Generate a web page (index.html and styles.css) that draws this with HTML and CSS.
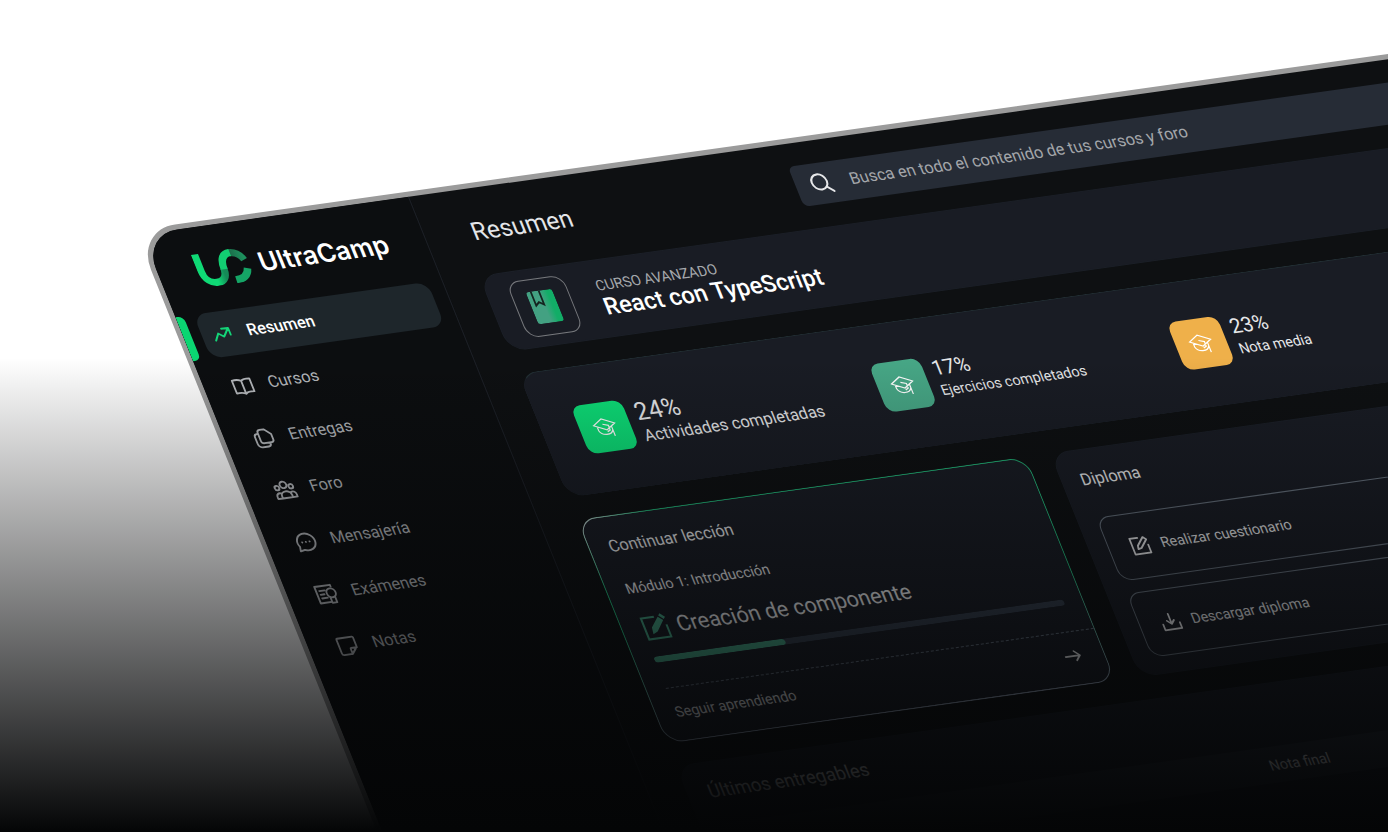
FILE: index.html
```
<!DOCTYPE html>
<html lang="es">
<head>
<meta charset="utf-8">
<meta name="viewport" content="width=device-width, initial-scale=1">
<title>UltraCamp - Resumen</title>
<link rel="stylesheet" href="styles.css">
</head>
<body>

<!-- shared icons -->
<svg class="defs" width="0" height="0" aria-hidden="true">
  <symbol id="cap" viewBox="0 0 32 32">
    <path d="M2 12.500 15 5 30 12.500 17 20zM14 12l7 2.500v6l-4 2M6 15.500v4c2 7.500 15 8.500 18.500 1M24.500 15.500V29"/>
  </symbol>
  <symbol id="edit" viewBox="0 0 24 24">
    <path d="M12 3H3v18h18v-9M8.500 15.500l.8-3.800L18 3l3 3-8.700 8.700z"/>
  </symbol>
  <symbol id="arrow" viewBox="0 0 24 24">
    <path d="M3 12h17M14.500 6.500 20 12l-5.500 5.500"/>
  </symbol>
</svg>

<div class="scene">
  <div class="panel">

    <aside class="sidebar">
      <a class="brand" href="#">
        <svg class="mark" viewBox="0 0 54 34" aria-hidden="true">
          <defs>
            <linearGradient id="fold" x1="0" y1="0" x2="1" y2="0">
              <stop offset="0.550" stop-color="#0fd975"/>
              <stop offset="0.950" stop-color="#158a57"/>
            </linearGradient>
            <linearGradient id="tip" x1="0" y1="0" x2="1" y2="0">
              <stop offset="0" stop-color="#1c6a49"/>
              <stop offset="1" stop-color="#1d8f5d"/>
            </linearGradient>
          </defs>
          <path d="M34 30.500C41 31 47 27.500 49 21" stroke="#15a566"/>
          <path d="M37 4C43 4 47 7 49 12.500" stroke="url(#tip)"/>
          <path d="M4 1V18C4 26 9 30.500 15.500 30.500S26.500 26 26.500 18" stroke="url(#fold)"/>
          <path d="M26.500 19C26.500 9 31 4 38 4" stroke="#12cf72"/>
        </svg>
        <span>UltraCamp</span>
      </a>
      <nav class="menu">
        <a class="item active" href="#">
          <svg class="icon" viewBox="0 0 24 24"><path d="M3 18l5-7 5 4 7-8M13 6.500h7.500V14"/></svg>
          Resumen
        </a>
        <a class="item" href="#">
          <svg class="icon" viewBox="0 0 24 24"><path d="M12 6.500C10 5 6 4.500 2.500 5v14c3.500-.5 7.500 0 9.500 1.500 2-1.500 6-2 9.500-1.500V5C18 4.500 14 5 12 6.500zv14"/></svg>
          Cursos
        </a>
        <a class="item" href="#">
          <svg class="icon" viewBox="0 0 24 24"><path d="M10.500 3H15l6 6v5.500a3 3 0 0 1-3 3h-7.500a3 3 0 0 1-3-3V6a3 3 0 0 1 3-3zM7 7H6a3 3 0 0 0-3 3v7.500A4 4 0 0 0 7 21.500h6.500a3 3 0 0 0 3-3"/></svg>
          Entregas
        </a>
        <a class="item" href="#">
          <svg class="icon" viewBox="0 0 24 24"><circle cx="12" cy="6.500" r="3.500"/><circle cx="4.500" cy="9" r="2.400"/><circle cx="19.500" cy="9" r="2.400"/><path d="M6.500 20.500v-2.500a5.500 4.500 0 0 1 11 0v2.500zM6.500 20.500h-5V18a3.500 3.500 0 0 1 5-3M17.500 20.500h5V18a3.500 3.500 0 0 0-5-3"/></svg>
          Foro
        </a>
        <a class="item" href="#">
          <svg class="icon" viewBox="0 0 24 24"><path d="M3 21l1-4.800A9.500 9 0 1 1 8 20zM8 12h.1M12 12h.1M16 12h.1"/></svg>
          Mensajería
        </a>
        <a class="item" href="#">
          <svg class="icon" viewBox="0 0 24 24"><path d="M19 5V3H2v18h12M5.500 8h6M5.500 12h4M5.500 16h6"/><circle cx="17" cy="11.500" r="4.800"/><path d="M14.500 16V22h5v-6"/></svg>
          Exámenes
        </a>
        <a class="item" href="#">
          <svg class="icon" viewBox="0 0 24 24"><path d="M4 3h16a1 1 0 0 1 1 1v10l-7 7H5a2 2 0 0 1-2-2V4a1 1 0 0 1 1-1zM14 21v-5.500a1 1 0 0 1 1-1h6"/></svg>
          Notas
        </a>
      </nav>
    </aside>

    <main class="main">
      <header class="topbar">
        <h1>Resumen</h1>
        <label class="search">
          <svg class="icon" viewBox="0 0 24 24"><circle cx="10" cy="10.500" r="7.500"/><path d="M15.500 16 21 21"/></svg>
          <input type="search" aria-label="Buscar" placeholder="Busca en todo el contenido de tus cursos y foro">
        </label>
      </header>

      <section class="card course">
        <div class="cover">
          <svg viewBox="0 0 26 32" aria-hidden="true">
            <defs>
              <linearGradient id="book" x1="0" y1="0" x2="1" y2="0">
                <stop offset="0.500" stop-color="#43a182"/>
                <stop offset="0.800" stop-color="#12ad67"/>
              </linearGradient>
            </defs>
            <rect width="26" height="32" rx="3" fill="url(#book)"/>
            <path d="M5 0v14l4-3 4 3V0" fill="#43a182" stroke="#14241f" stroke-width="1.800"/>
          </svg>
        </div>
        <div>
          <p class="kicker">CURSO AVANZADO</p>
          <h2>React con TypeScript</h2>
        </div>
      </section>

      <section class="card stats">
        <div class="stat stat-main">
          <span class="tile green"><svg><use href="#cap"/></svg></span>
          <div><strong>24%</strong><p>Actividades completadas</p></div>
        </div>
        <div class="stat">
          <span class="tile teal"><svg><use href="#cap"/></svg></span>
          <div><strong>17%</strong><p>Ejercicios completados</p></div>
        </div>
        <div class="stat">
          <span class="tile amber"><svg><use href="#cap"/></svg></span>
          <div><strong>23%</strong><p>Nota media</p></div>
        </div>
      </section>

      <div class="columns">
        <section class="card lesson">
          <h3>Continuar lección</h3>
          <p class="module">Módulo 1: Introducción</p>
          <div class="topic">
            <svg viewBox="0 0 28 28" aria-hidden="true">
              <path class="frame" d="M16 4H3v21h22V13"/>
              <path class="pen" d="M9 20.500l1-6.500 9.500-9.500 4 4-9.500 10zM20.500 3.500l2-2 4 4-2 2z"/>
            </svg>
            <span>Creación de componente</span>
          </div>
          <progress value="32" max="100" aria-label="Progreso de la lección"></progress>
          <a class="next" href="#">
            <span>Seguir aprendiendo</span>
            <svg class="icon"><use href="#arrow"/></svg>
          </a>
        </section>

        <section class="card diploma">
          <h3>Diploma</h3>
          <button type="button" class="action">
            <svg class="icon"><use href="#edit"/></svg>
            <span>Realizar cuestionario</span>
            <svg class="icon"><use href="#arrow"/></svg>
          </button>
          <button type="button" class="action">
            <svg class="icon" viewBox="0 0 24 24"><path d="M12 3v11M8 10.500l4 4 4-4M2.500 14v6.500h19V14"/></svg>
            <span>Descargar diploma</span>
            <svg class="icon"><use href="#arrow"/></svg>
          </button>
        </section>
      </div>

      <section class="card deliveries">
        <h2>Últimos entregables</h2>
        <table>
          <thead>
            <tr><td></td><th scope="col">Nota final</th></tr>
          </thead>
        </table>
      </section>
    </main>

  </div>
</div>

</body>
</html>
```
FILE: styles.css
```
* {
  box-sizing: border-box;
}

body {
  margin: 0;
  background: #fff;
  color: #e6e7e9;
  font-family: Roboto, "Liberation Sans", sans-serif;
  font-size: 14px;
  line-height: 20px;
}

h1, h2, h3, p {
  margin: 0;
  font-weight: 400;
}

a {
  color: inherit;
  text-decoration: none;
}

.defs {
  position: absolute;
}

/* tilted mockup, fading to black at the bottom */
.scene {
  position: relative;
  height: calc(100vh - 1px);
  padding: 230px 0 0 135px;
  overflow: hidden;
}

.scene::after {
  content: "";
  position: absolute;
  inset: 0;
  background: linear-gradient(rgba(4, 5, 6, 0) 43%, rgb(4, 5, 6) 100%);
  pointer-events: none;
}

.panel {
  display: flex;
  width: 95vw;
  min-width: 1312px;
  min-height: 800px;
  border: 5px solid #9b9b9b;
  border-radius: 40px;
  background: #0e1012;
  overflow: hidden;
  transform: matrix(1, -0.1405, 0.402, 1, 0, 0);
  transform-origin: 0 0;
}

.icon {
  flex: none;
  width: 24px;
  height: 24px;
  fill: none;
  stroke: currentColor;
  stroke-width: 2;
  stroke-linecap: round;
  stroke-linejoin: round;
}

/* sidebar */
.sidebar {
  flex: none;
  width: 267px;
  border-right: 1px solid #1d2027;
  background: #0c0e10;
}

.brand {
  display: flex;
  align-items: center;
  gap: 8px;
  height: 83px;
  padding-left: 38px;
  color: #fff;
  font-family: Inter, Roboto, sans-serif;
  font-size: 25px;
  font-weight: 600;
}

.mark {
  width: 54px;
  height: 34px;
  fill: none;
  stroke-width: 7;
}

.menu {
  display: flex;
  flex-direction: column;
  gap: 8px;
  padding: 0 14px 0 18px;
}

.item {
  display: flex;
  align-items: center;
  gap: 14px;
  height: 44px;
  padding-left: 9px;
  border-radius: 12px;
  color: #b4b7bb;
  font-size: 16px;
}

.item .icon {
  width: 22px;
  height: 22px;
}

.item.active {
  position: relative;
  background: #1e262b;
  color: #fff;
  font-weight: 500;
}

.item.active .icon {
  stroke: #14d478;
}

.item.active::before {
  content: "";
  position: absolute;
  left: -18px;
  top: 0;
  width: 8px;
  height: 44px;
  border-radius: 0 6px 6px 0;
  background: #0bd672;
}

/* main */
.main {
  flex: 1;
  display: flex;
  flex-direction: column;
  gap: 22px;
  padding: 22px 36px 0;
}

.topbar {
  display: grid;
  grid-template-columns: 334px 1fr;
  align-items: center;
}

.topbar h1 {
  padding-left: 10px;
  color: #e3e5e8;
  font-size: 24px;
  line-height: 32px;
}

.search {
  display: flex;
  align-items: center;
  gap: 16px;
  height: 40px;
  padding-left: 14px;
  border-radius: 6px;
  background: #262c36;
}

.search input {
  flex: 1;
  padding: 0;
  border: 0;
  outline: 0;
  background: none;
  color: inherit;
  font: inherit;
  font-size: 16px;
}

.search input::placeholder {
  color: #a3a6aa;
}

.card {
  border: 1px solid #1b1f27;
  border-radius: 18px;
  background: #191c24;
}

.course {
  display: flex;
  align-items: center;
  gap: 28px;
  height: 76px;
  padding-left: 22px;
}

.cover {
  display: flex;
  align-items: center;
  justify-content: center;
  width: 56px;
  height: 56px;
  border: 1px solid #75777b;
  border-radius: 12px;
}

.cover svg {
  width: 26px;
  height: 32px;
}

.kicker {
  color: #a5a8ac;
  line-height: 18px;
}

.course h2 {
  color: #fff;
  font-size: 23px;
  font-weight: 500;
  line-height: 26px;
}

.stats {
  display: grid;
  grid-template-columns: repeat(3, 298px);
  align-items: center;
  height: 124px;
  padding-left: 36px;
  border-top-color: #222e33;
}

.stat {
  display: flex;
  gap: 9px;
}

.stat strong {
  display: block;
  font-size: 20px;
  font-weight: 400;
  line-height: 24px;
}

.stat-main strong {
  font-size: 24px;
  line-height: 28px;
}

.stat-main p {
  font-size: 16px;
}

.tile {
  display: flex;
  align-items: center;
  justify-content: center;
  width: 50px;
  height: 48px;
  border-radius: 9px;
}

.tile svg {
  width: 24px;
  height: 24px;
  fill: none;
  stroke: #fff;
  stroke-width: 1.6;
}

.green {
  background: #0ddf78;
}

.teal {
  background: #47a786;
}

.amber {
  background: #efb04a;
}

.columns {
  display: grid;
  grid-template-columns: 449px 360px;
  gap: 24px;
}

.columns h3 {
  font-size: 16px;
}

.lesson {
  padding: 19px 0 0 19px;
  border-color: transparent;
  background:
    linear-gradient(#191c24, #191c24) padding-box,
    radial-gradient(circle at 0 0, #c4cccf, rgba(196, 204, 207, 0) 70px) border-box,
    linear-gradient(#22ad74 50%, #8f9bb0) border-box;
}

.module {
  margin-top: 22px;
}

.topic {
  display: flex;
  align-items: center;
  gap: 7px;
  margin-top: 16px;
  font-size: 21px;
  line-height: 28px;
}

.topic svg {
  width: 28px;
  height: 28px;
}

.frame {
  fill: none;
  stroke: #43a182;
  stroke-width: 2;
}

.pen {
  fill: #43a182;
}

.lesson progress {
  display: block;
  width: 410px;
  height: 6px;
  margin-top: 14px;
  border: 0;
  border-radius: 3px;
  background: #333c4a;
  overflow: hidden;
  appearance: none;
}

.lesson progress::-webkit-progress-bar {
  background: #333c4a;
}

.lesson progress::-webkit-progress-value {
  border-radius: 3px;
  background: #43a182;
}

.next {
  display: flex;
  justify-content: space-between;
  align-items: center;
  margin-top: 25px;
  padding: 13px 18px 18px 0;
  border-top: 1px dashed #5f6a78;
}

.next .icon {
  height: 20px;
}

.diploma {
  padding: 19px 18px 16px;
}

.diploma h3 {
  margin-bottom: 27px;
}

.action {
  display: flex;
  align-items: center;
  gap: 10px;
  width: 100%;
  height: 64px;
  padding: 0 16px 0 20px;
  border: 1px solid #66707c;
  border-radius: 12px;
  background: none;
  color: inherit;
  font: inherit;
}

.action + .action {
  margin-top: 12px;
}

.action span {
  flex: 1;
  text-align: left;
}

.action .icon {
  width: 21px;
  height: 21px;
}

.deliveries {
  flex: 1;
  padding: 16px 0 0 20px;
}

.deliveries h2 {
  font-size: 18px;
  line-height: 24px;
}

.deliveries table {
  width: 100%;
  margin-top: 20px;
  border-collapse: collapse;
  background: #252a33;
}

.deliveries td {
  width: 541px;
  padding: 0;
}

.deliveries th {
  height: 35px;
  padding: 0;
  font-weight: 400;
  text-align: left;
}
```
